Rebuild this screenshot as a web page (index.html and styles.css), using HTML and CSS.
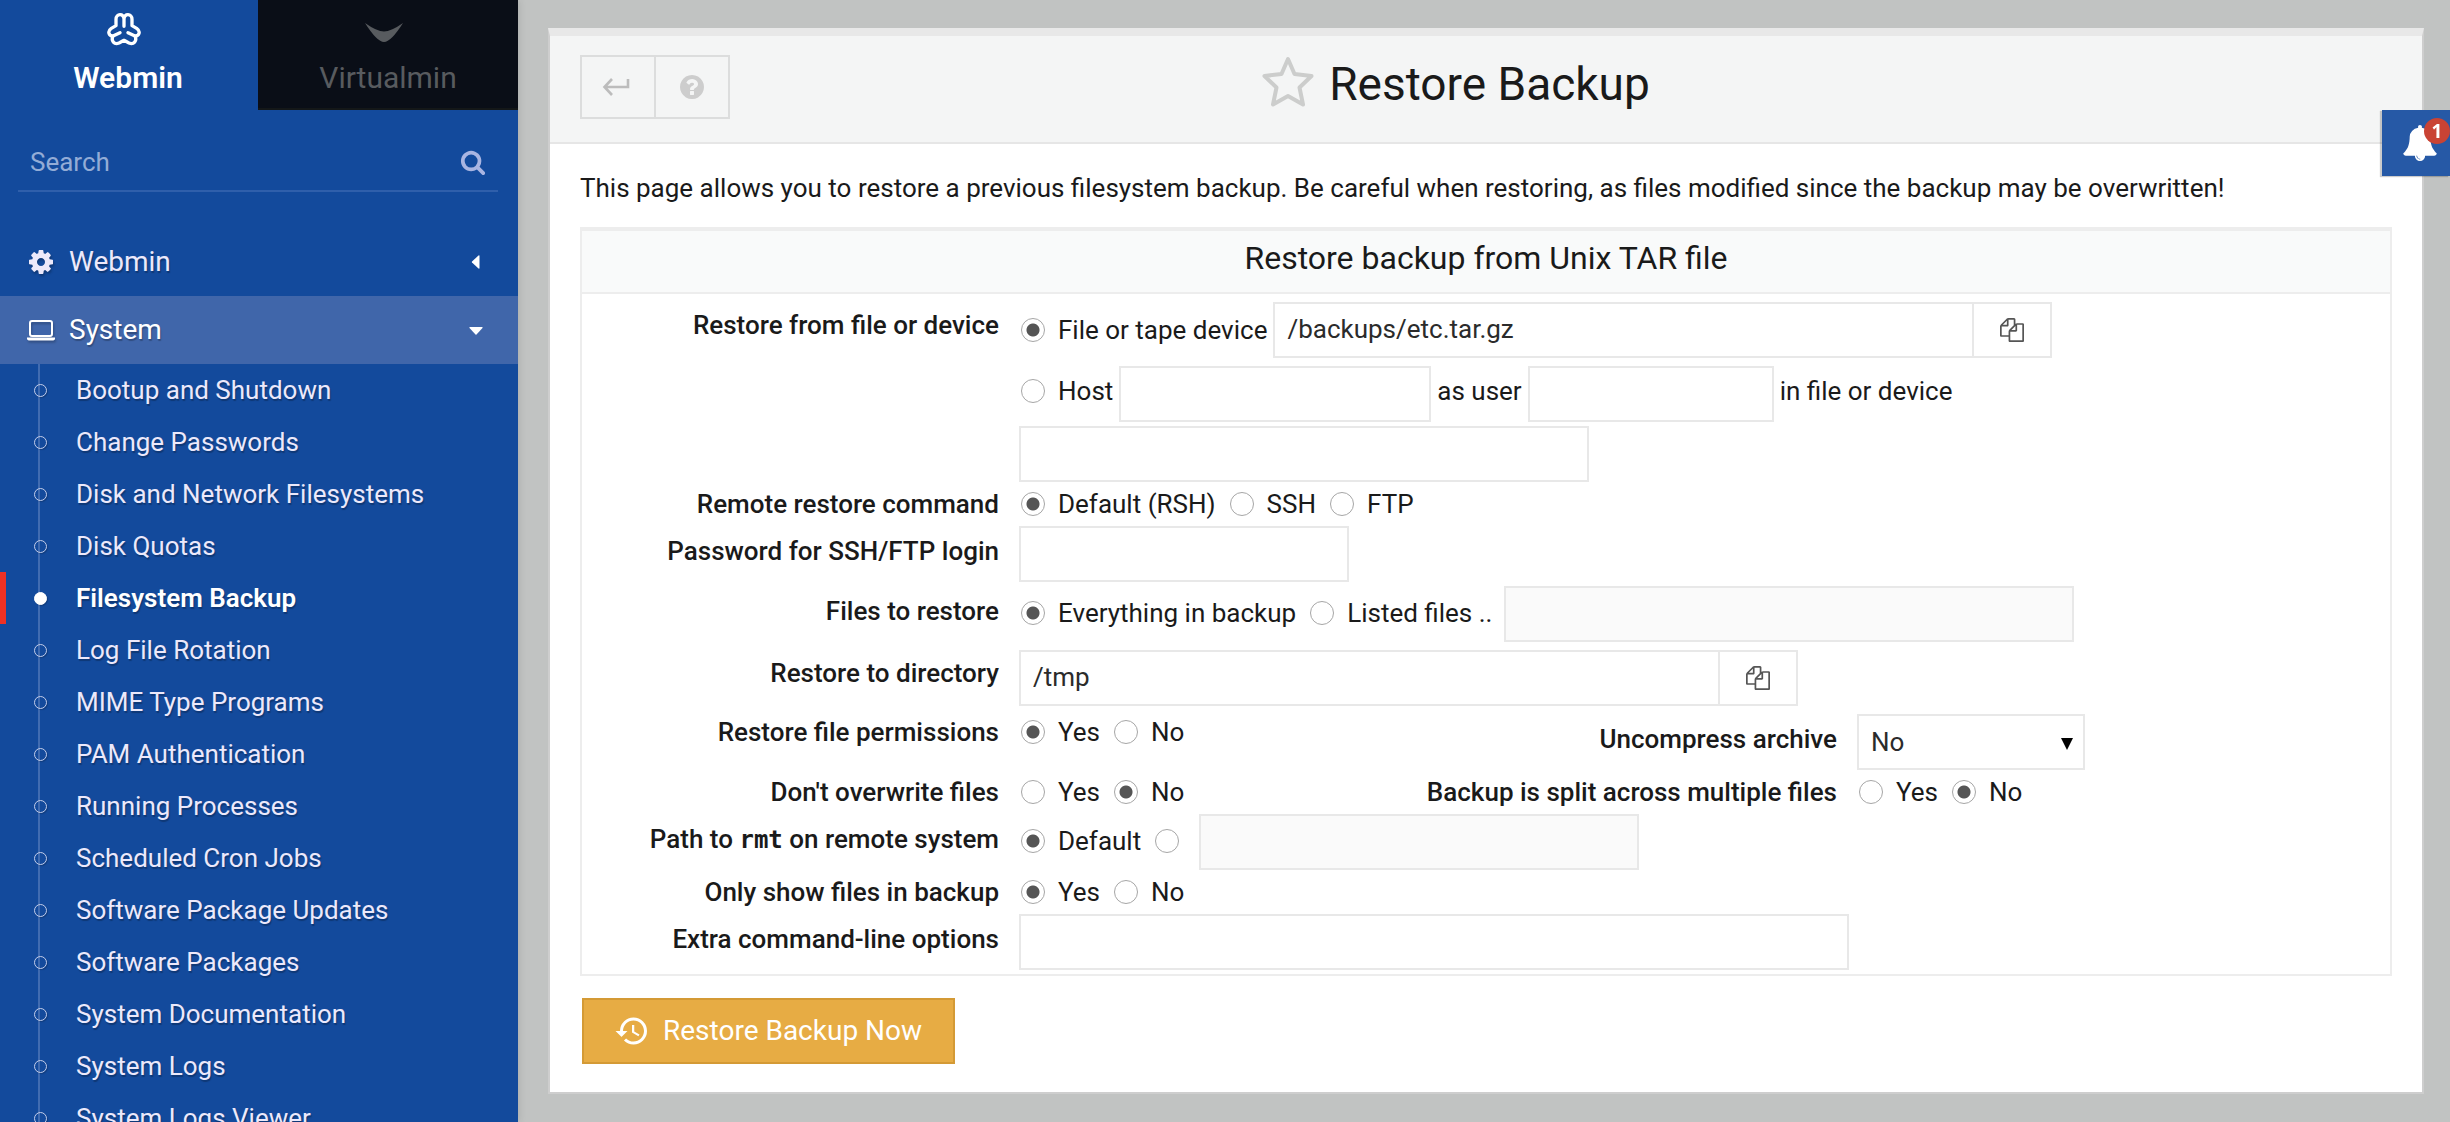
FILE: index.html
```html
<!DOCTYPE html>
<html lang="en">
<head>
<meta charset="utf-8">
<meta name="viewport" content="width=device-width, initial-scale=1">
<title>Restore Backup</title>
<link rel="stylesheet" href="styles.css">
</head>
<body>
<svg class="sprite" aria-hidden="true">
  <symbol id="i-files" viewBox="0 0 1792 1792"><path d="M1696 384q40 0 68 28t28 68v1216q0 40-28 68t-68 28h-960q-40 0-68-28t-28-68v-288h-544q-40 0-68-28t-28-68v-672q0-40 20-88t48-76l408-408q28-28 76-48t88-20h416q40 0 68 28t28 68v328q68-40 128-40h416zm-544 213l-299 299h299v-299zm-640-384l-299 299h299v-299zm196 647l316-316v-416h-384v416q0 40-28 68t-68 28h-416v640h512v-256q0-40 20-88t48-76zm956 804v-1152h-384v416q0 40-28 68t-68 28h-416v640h896z"/></symbol>
</svg>

<aside class="sidebar">
  <div class="tabs">
    <button class="tab tab--active" type="button">
      <svg class="tab__icon" width="36" height="34" viewBox="314 35 106 102" fill="none" stroke="#fff" stroke-width="10" stroke-linecap="round" stroke-linejoin="round"><path d="M367 78V56C367 38 343 39 343 57V76L329 84C317 92 320 106 334 107C327 122 338 134 352 128L367 120L382 128C396 134 407 122 400 107C414 106 417 92 405 84L391 76V57C391 39 367 38 367 56M334 107L355 97M400 107L379 97"/></svg>
      <span>Webmin</span>
    </button>
    <button class="tab" type="button">
      <svg class="tab__icon" width="38" height="34" viewBox="0 0 38 34" fill="#585b5f"><path d="M0 11Q12 19.500 19 19.500T38 11Q26 30 19 30T0 11Z"/></svg>
      <span>Virtualmin</span>
    </button>
  </div>

  <form class="search">
    <input type="search" placeholder="Search" aria-label="Search">
    <svg width="26" height="26" viewBox="0 0 1792 1792" fill="#a9b5e2"><path d="M1216 832q0-185-131.500-316.500t-316.500-131.500-316.500 131.500-131.500 316.500 131.500 316.500 316.500 131.500 316.500-131.500 131.500-316.500zm512 832q0 52-38 90t-90 38q-54 0-90-38l-343-342q-179 124-399 124-143 0-273.500-55.500t-225-150-150-225-55.500-273.500 55.500-273.500 150-225 225-150 273.500-55.500 273.500 55.500 225 150 150 225 55.500 273.500q0 220-124 399l343 343q37 37 37 90z"/></svg>
  </form>

  <nav>
    <a class="section" href="#webmin">
      <svg class="section__icon" width="28" height="28" viewBox="0 0 1792 1792" fill="#ece9fb"><path d="M1152 896q0-106-75-181t-181-75-181 75-75 181 75 181 181 75 181-75 75-181zm512-109v222q0 12-8 23t-20 13l-185 28q-19 54-39 91 35 50 107 138 10 12 10 25t-9 23q-27 37-99 108t-94 71q-12 0-26-9l-138-108q-44 23-91 38-16 136-29 186-7 28-36 28h-222q-14 0-24.500-8.500t-11.500-21.500l-28-184q-49-16-90-37l-141 107q-10 9-25 9-14 0-25-11-126-114-165-168-7-10-7-23 0-12 8-23 15-21 51-66.500t54-70.500q-27-50-41-99l-183-27q-13-2-21-12.500t-8-23.500v-222q0-12 8-23t19-13l186-28q14-46 39-92-40-57-107-138-10-12-10-24 0-10 9-23 26-36 98.500-107.500t94.500-71.500q13 0 26 10l138 107q44-23 91-38 16-136 29-186 7-28 36-28h222q14 0 24.500 8.500t11.500 21.500l28 184q49 16 90 37l142-107q9-9 24-9 13 0 25 10 129 119 165 170 7 8 7 22 0 12-8 23-15 21-51 66.500t-54 70.500q26 50 41 98l183 28q13 2 21 12.500t8 23.500z"/></svg>
      <span>Webmin</span>
      <svg class="section__caret" width="14" height="14" viewBox="0 0 14 14" fill="#fff"><path d="M10.500 1V13Q10.500 14 9.500 13.500L3 7.500Q2.500 7 3 6.500L9.500.5Q10.500 0 10.500 1Z"/></svg>
    </a>
    <a class="section section--open" href="#system">
      <svg class="section__icon" width="28" height="28" viewBox="0 0 28 28"><rect x="3" y="5" width="22" height="15" rx="2" fill="none" stroke="#fff" stroke-width="2"/><path d="M0 21.500H28V22.500Q28 24.500 25 24.500H3Q0 24.500 0 22.500Z" fill="#fff"/></svg>
      <span>System</span>
      <svg class="section__caret" width="14" height="14" viewBox="0 0 14 14" fill="#fff"><path d="M1 4H13Q14 4 13.500 5L7.500 11.500Q7 12 6.500 11.500L.5 5Q0 4 1 4Z"/></svg>
    </a>
    <ul class="links">
      <li><a href="#bootup">Bootup and Shutdown</a></li>
      <li><a href="#passwords">Change Passwords</a></li>
      <li><a href="#disks">Disk and Network Filesystems</a></li>
      <li><a href="#quotas">Disk Quotas</a></li>
      <li><a class="current" href="#backup" aria-current="page">Filesystem Backup</a></li>
      <li><a href="#rotation">Log File Rotation</a></li>
      <li><a href="#mime">MIME Type Programs</a></li>
      <li><a href="#pam">PAM Authentication</a></li>
      <li><a href="#processes">Running Processes</a></li>
      <li><a href="#cron">Scheduled Cron Jobs</a></li>
      <li><a href="#updates">Software Package Updates</a></li>
      <li><a href="#packages">Software Packages</a></li>
      <li><a href="#docs">System Documentation</a></li>
      <li><a href="#logs">System Logs</a></li>
      <li><a href="#viewer">System Logs Viewer</a></li>
    </ul>
  </nav>
</aside>

<main class="main">
  <section class="card">
    <header class="card__header">
      <div class="tools">
        <button type="button" aria-label="Back"><svg class="tools__back" width="28" height="18" viewBox="0 0 28 18" fill="none" stroke="#bcbcbc" stroke-width="2.600"><path d="M10 1L2.500 9L10 17M2.500 9H26V1"/></svg></button>
        <button type="button" aria-label="Help"><svg width="28" height="28" viewBox="0 0 1792 1792" fill="#cdcdcd"><path d="M1024 1376v-192q0-14-9-23t-23-9h-192q-14 0-23 9t-9 23v192q0 14 9 23t23 9h192q14 0 23-9t9-23zm256-672q0-88-55.500-163t-138.500-116-170-41q-243 0-371 213-15 24 8 42l132 100q7 6 19 6 16 0 25-12 53-68 86-92 34-24 86-24 48 0 85.500 26t37.500 59q0 38-20 61t-68 45q-63 28-115.500 86.500t-52.500 125.500v36q0 14 9 23t23 9h192q14 0 23-9t9-23q0-19 21.500-49.500t54.500-49.500q32-18 49-28.500t46-35 44.500-48 28-60.500 12.500-81zm384 192q0 209-103 385.500t-279.500 279.500-385.500 103-385.500-103-279.500-279.500-103-385.500 103-385.500 279.500-279.500 385.500-103 385.500 103 279.500 279.500 103 385.500z"/></svg></button>
      </div>
      <h1 class="title">
        <svg width="52" height="52" viewBox="0 0 52 52" fill="none" stroke="#cccdcc" stroke-width="4" stroke-linejoin="round"><path d="M26 4L32.500 19L49.500 21L37.500 32.500L41 49.500L26 41L11 49.500L14.500 32.500L2.500 21L19.500 19Z"/></svg>
        <span>Restore Backup</span>
      </h1>
    </header>

    <div class="card__body">
      <p class="intro">This page allows you to restore a previous filesystem backup. Be careful when restoring, as files modified since the backup may be overwritten!</p>

      <form class="form">
        <div class="panel">
          <h2 class="panel__title">Restore backup from Unix TAR file</h2>
          <div class="rows">
            <div class="row">
              <div class="name name--group">Restore from file or device</div>
              <div class="stack wide">
                <div class="field field--group">
                  <label class="opt opt--tight"><input type="radio" name="src" checked>File or tape device</label>
                  <div class="group"><input class="w-700" type="text" value="/backups/etc.tar.gz" aria-label="File or tape device"><button type="button" aria-label="Browse files"><svg width="24" height="24"><use href="#i-files"/></svg></button></div>
                </div>
                <div class="field field--host">
                  <label class="opt opt--tight"><input type="radio" name="src">Host</label>
                  <input class="w-312" type="text" aria-label="Host">
                  <label for="user">as user</label>
                  <input class="w-246" id="user" type="text">
                  <label for="remote">in file or device</label>
                </div>
                <div class="field">
                  <input class="w-570" id="remote" type="text">
                </div>
              </div>
            </div>

            <div class="row">
              <div class="name name--radio">Remote restore command</div>
              <div class="field wide">
                <label class="opt"><input type="radio" name="cmd" checked>Default (RSH)</label>
                <label class="opt"><input type="radio" name="cmd">SSH</label>
                <label class="opt"><input type="radio" name="cmd">FTP</label>
              </div>
            </div>

            <div class="row">
              <label class="name" for="pass">Password for SSH/FTP login</label>
              <div class="field wide"><input class="w-330" id="pass" type="password"></div>
            </div>

            <div class="row">
              <div class="name">Files to restore</div>
              <div class="field field--mixed wide">
                <label class="opt"><input type="radio" name="files" checked>Everything in backup</label>
                <label class="opt"><input type="radio" name="files">Listed files ..</label>
                <input class="w-570" type="text" aria-label="Listed files" disabled>
              </div>
            </div>

            <div class="row">
              <label class="name name--group" for="dir">Restore to directory</label>
              <div class="field field--group wide">
                <div class="group"><input class="w-700" id="dir" type="text" value="/tmp"><button type="button" aria-label="Browse directories"><svg width="24" height="24"><use href="#i-files"/></svg></button></div>
              </div>
            </div>

            <div class="row">
              <div class="name name--perms">Restore file permissions</div>
              <div class="field field--group">
                <label class="opt"><input type="radio" name="perm" checked>Yes</label>
                <label class="opt"><input type="radio" name="perm">No</label>
              </div>
              <label class="name name--select" for="comp">Uncompress archive</label>
              <div class="field field--group">
                <div class="select"><select id="comp"><option>No</option><option>Yes</option></select><svg width="12" height="12" viewBox="0 0 12 12"><path d="M0 0H12L6 12Z"/></svg></div>
              </div>
            </div>

            <div class="row">
              <div class="name name--radio">Don't overwrite files</div>
              <div class="field">
                <label class="opt"><input type="radio" name="over">Yes</label>
                <label class="opt"><input type="radio" name="over" checked>No</label>
              </div>
              <div class="name name--radio">Backup is split across multiple files</div>
              <div class="field">
                <label class="opt"><input type="radio" name="split">Yes</label>
                <label class="opt"><input type="radio" name="split" checked>No</label>
              </div>
            </div>

            <div class="row">
              <div class="name">Path to <code>rmt</code> on remote system</div>
              <div class="field field--mixed wide">
                <label class="opt"><input type="radio" name="rmt" checked>Default</label>
                <label class="opt opt--bare"><input type="radio" name="rmt" aria-label="Other path"></label>
                <input class="w-440" type="text" aria-label="Path to rmt" disabled>
              </div>
            </div>

            <div class="row">
              <div class="name name--radio">Only show files in backup</div>
              <div class="field wide">
                <label class="opt"><input type="radio" name="show" checked>Yes</label>
                <label class="opt"><input type="radio" name="show">No</label>
              </div>
            </div>

            <div class="row">
              <label class="name" for="extra">Extra command-line options</label>
              <div class="field wide"><input class="w-830" id="extra" type="text"></div>
            </div>
          </div>
        </div>

        <button class="submit" type="submit">
          <svg width="36" height="36" viewBox="0 0 24 24" fill="#fff"><path d="M13 3a9 9 0 0 0-9 9H1l3.890 3.890.07.14L9 12H6c0-3.870 3.130-7 7-7s7 3.130 7 7-3.130 7-7 7c-1.930 0-3.680-.79-4.940-2.060l-1.420 1.420A8.954 8.954 0 0 0 13 21a9 9 0 0 0 0-18zm-1 5v5l4.280 2.540.72-1.210-3.500-2.080V8H12z"/></svg>
          <span>Restore Backup Now</span>
        </button>
      </form>
    </div>
  </section>
</main>

<button class="bell" type="button" aria-label="Notifications">
  <svg width="36" height="36" viewBox="0 0 1792 1792" fill="#fff"><path d="M912 1696q0-16-16-16-59 0-101.500-42.500t-42.500-101.500q0-16-16-16t-16 16q0 73 51.500 124.500t124.500 51.500q16 0 16-16zm816-288q0 52-38 90t-90 38h-448q0 106-75 181t-181 75-181-75-75-181h-448q-52 0-90-38t-38-90q50-42 91-88t85-119.500 74.500-158.500 50-206 19.500-260q0-152 117-282.500t307-158.500q-8-19-8-39 0-40 28-68t68-28 68 28 28 68q0 20-8 39 190 28 307 158.500t117 282.500q0 139 19.500 260t50 206 74.500 158.500 85 119.500 91 88z"/></svg>
  <span class="bell__count">1</span>
</button>
</body>
</html>
```
FILE: styles.css
```css
* {
  box-sizing: border-box;
}

body {
  margin: 0;
  display: flex;
  min-height: 100vh;
  background: #c1c3c2;
  color: #1a1a1a;
  font: 26px/30px Roboto, sans-serif;
}

button,
input,
select {
  margin: 0;
  font: inherit;
  color: inherit;
}

a {
  color: inherit;
  text-decoration: none;
}

.sprite {
  position: absolute;
  width: 0;
  height: 0;
}

/* Sidebar */
.sidebar {
  flex: none;
  width: 518px;
  height: 100vh;
  overflow: hidden;
  background: #134a9c;
  color: #ece9fb;
  box-shadow: 0 0 8px rgba(0, 0, 0, 0.15);
}

.tabs {
  display: flex;
}

.tab {
  display: flex;
  flex-direction: column;
  align-items: center;
  gap: 16px;
  width: 260px;
  height: 110px;
  padding: 12px 0 0;
  border: 0;
  border-bottom: 2px solid #141718;
  background: #0a0e17;
  color: #585b5f;
  font-size: 30px;
  line-height: 32px;
}

.tab--active {
  width: 258px;
  padding-right: 2px;
  border-color: transparent;
  background: none;
  color: #fff;
  font-weight: 600;
}

.tab__icon {
  margin-right: 8px;
}

.search {
  display: flex;
  align-items: center;
  justify-content: space-between;
  height: 62px;
  margin: 20px 20px 36px 18px;
  padding: 4px 12px 0;
  border-bottom: 2px solid #2f5fab;
}

.search input {
  flex: 1;
  min-width: 0;
  padding: 0;
  border: 0;
  outline: 0;
  background: none;
}

.search input::placeholder {
  color: #93acd6;
  opacity: 1;
}

.section {
  display: flex;
  align-items: center;
  height: 68px;
  padding: 0 35px 0 27px;
  font-size: 28px;
  text-shadow: 1px 2px 1px rgba(0, 0, 0, 0.25);
}

.section--open {
  background: #4066aa;
  color: #fff;
}

.section__icon {
  margin-right: 14px;
  filter: drop-shadow(1px 2px 1px rgba(0, 0, 0, 0.25));
}

.section__caret {
  margin-left: auto;
}

.links {
  margin: 0;
  padding: 0 0 0 38px;
  list-style: none;
  background: linear-gradient(#416cb1, #416cb1) 38px 0 / 2px 100% no-repeat;
}

.links a {
  position: relative;
  display: flex;
  align-items: center;
  height: 52px;
  padding-left: 38px;
  text-shadow: 1px 2px 1px rgba(0, 0, 0, 0.25);
}

.links a::before {
  content: "";
  position: absolute;
  left: -4px;
  top: 20px;
  width: 11px;
  height: 11px;
  border: 1px solid #c3cdea;
  border-radius: 50%;
  box-shadow: 1px 1px 1px rgba(0, 0, 0, 0.2);
}

.links .current {
  color: #fff;
  font-weight: 600;
}

.links .current::before {
  border-color: #fff;
  background: #fff;
}

.links .current::after {
  content: "";
  position: absolute;
  left: -38px;
  top: 0;
  width: 6px;
  height: 100%;
  background: #ee3124;
}

/* Main card */
.main {
  flex: 1;
  min-width: 0;
  padding: 28px 26px 28px 30px;
}

.card {
  border: 2px solid #cecece;
  border-top: 8px solid #e8e8e8;
  background: #fff;
}

.card__header {
  display: grid;
  grid-template-columns: 1fr auto 1fr;
  align-items: start;
  height: 108px;
  padding: 19px 30px 0;
  border-bottom: 2px solid #e6e6e6;
  background: #f4f5f5;
}

.tools {
  display: flex;
}

.tools button {
  display: flex;
  align-items: center;
  justify-content: center;
  width: 76px;
  height: 64px;
  padding: 0;
  border: 2px solid #dcdddd;
  background: none;
}

.tools button + button {
  margin-left: -2px;
}

.tools__back {
  margin-right: 4px;
}

.title {
  display: flex;
  align-items: center;
  gap: 15px;
  margin: 0;
  padding-right: 60px;
  font-size: 46px;
  font-weight: 400;
  line-height: 58px;
}

.title svg {
  margin-bottom: 6px;
}

.card__body {
  padding: 29px 30px 28px;
}

.intro {
  margin: 0 0 24px;
}

.panel {
  border: 2px solid #ededed;
  border-top-width: 4px;
}

.panel__title {
  margin: 0;
  padding: 7px 0 14px;
  border-bottom: 2px solid #ededed;
  background: #f9fafa;
  font-size: 32px;
  font-weight: 400;
  line-height: 40px;
  text-align: center;
}

.rows {
  padding: 2px 0;
}

.row {
  display: grid;
  grid-template-columns: 427fr 408fr 430fr 543fr;
  align-items: start;
}

.wide {
  grid-column: 2 / -1;
}

.name {
  padding: 12px 10px 0 0;
  font-weight: 500;
  text-align: right;
  white-space: nowrap;
}

.name--radio {
  padding-top: 5px;
}

.name--perms {
  padding-top: 9px;
}

.name--group {
  padding-top: 14px;
}

.name--select {
  padding-top: 16px;
}

.name code {
  font: 700 24px/24px "DejaVu Sans Mono", monospace;
}

.field {
  display: flex;
  align-items: center;
  gap: 6px;
  min-height: 40px;
  padding: 2px 0 2px 10px;
}

.field--group {
  min-height: 44px;
  padding-top: 6px;
}

.field--host {
  padding-top: 6px;
}

.field--host label {
  padding-bottom: 6px;
}

.opt {
  display: flex;
  align-items: center;
  gap: 13px;
  margin: 0 6px 0 2px;
}

.field--mixed .opt {
  padding-bottom: 2px;
}

.opt--tight {
  margin-right: 0;
}

.opt--bare {
  margin-right: 14px;
}

.opt input {
  appearance: none;
  flex: none;
  width: 24px;
  height: 24px;
  border: 1px solid #a6a6a6;
  border-radius: 50%;
  background: #fff;
}

.opt input:checked {
  background: radial-gradient(circle, #555 6px, #fff 7px);
}

input[type="text"],
input[type="password"],
.select select {
  height: 56px;
  padding: 0 12px 2px;
  border: 2px solid #e8e8e8;
  border-radius: 0;
  outline: 0;
  background: #fff;
  color: #2b2b2b;
}

input[type="text"]:disabled {
  background: #fafafa;
}

.w-246 { width: 246px; }
.w-312 { width: 312px; }
.w-330 { width: 330px; }
.w-440 { width: 440px; }
.w-570 { width: 570px; }
.w-700 { width: 701px; }
.w-830 { width: 830px; }

.group {
  display: flex;
}

.group button {
  display: flex;
  align-items: center;
  justify-content: center;
  width: 80px;
  height: 56px;
  margin-left: -2px;
  padding: 0;
  border: 2px solid #e8e8e8;
  background: #fff;
  fill: #555;
}

.select {
  position: relative;
}

.select select {
  appearance: none;
  width: 228px;
  padding-bottom: 0;
}

.select svg {
  position: absolute;
  right: 12px;
  top: 24px;
  pointer-events: none;
}

.submit {
  display: flex;
  align-items: center;
  gap: 13px;
  height: 66px;
  margin: 22px 0 0 2px;
  padding: 0 31px 0 30px;
  border: 2px solid #d49a35;
  background: #e7ac44;
  color: #fff;
  font-size: 28px;
}

/* Notification bell, pinned to the window edge */
.bell {
  position: fixed;
  top: 110px;
  right: 0;
  display: flex;
  align-items: center;
  justify-content: center;
  width: 68px;
  height: 66px;
  padding: 0 0 0 8px;
  border: 0;
  background: #2659a6;
  box-shadow: -2px 1px 1px rgba(0, 0, 0, 0.2);
}

.bell__count {
  position: absolute;
  top: 8px;
  right: 0;
  width: 26px;
  height: 26px;
  border-radius: 50%;
  background: #c94334;
  color: #fff;
  font: 700 19px/26px "Open Sans", sans-serif;
}
```
